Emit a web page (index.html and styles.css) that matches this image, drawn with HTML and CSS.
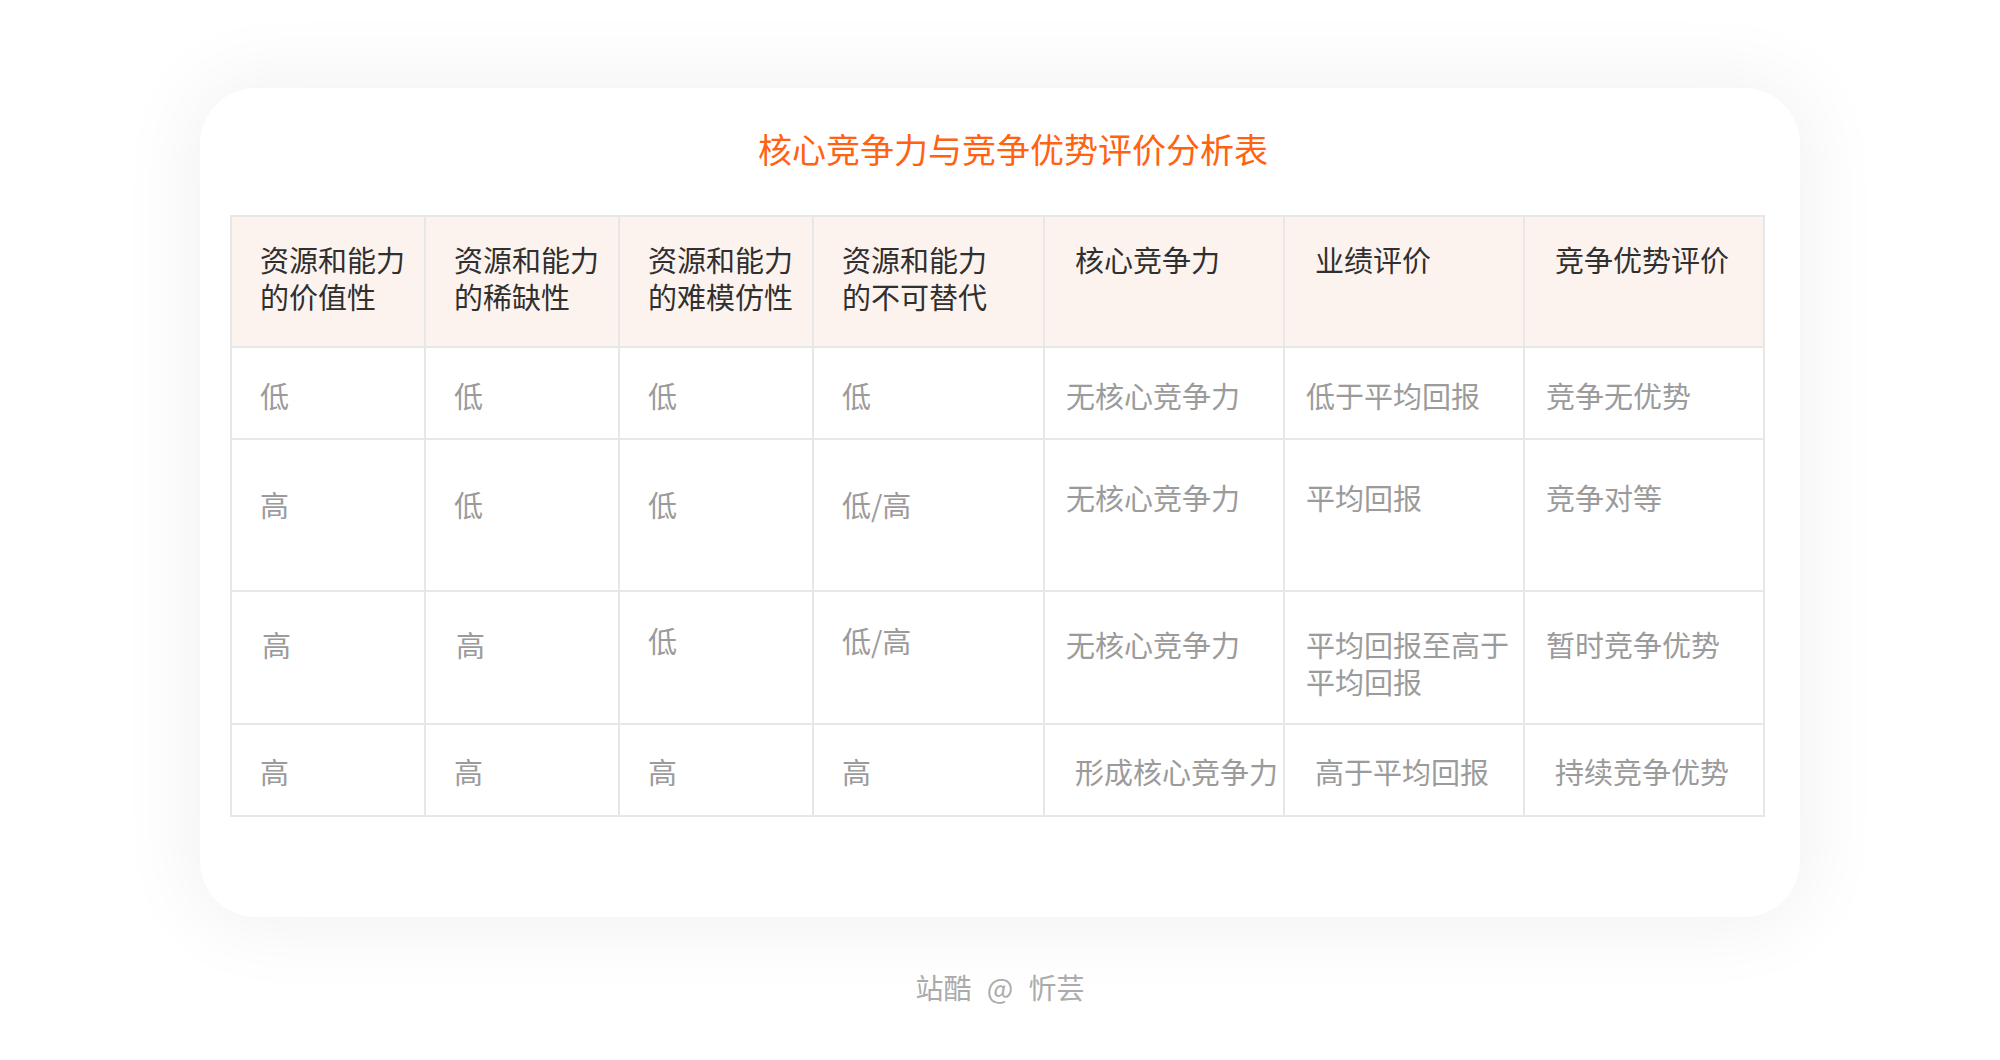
FILE: index.html
```html
<!DOCTYPE html>
<html lang="zh-CN">
<head>
<meta charset="utf-8">
<title>核心竞争力与竞争优势评价分析表</title>
<link rel="stylesheet" href="styles.css">
</head>
<body>
<div class="page">
  <div class="card">
    <h1 class="title">核心竞争力与竞争优势评价分析表</h1>
    <table class="grid">
      <colgroup>
        <col class="c-a"><col class="c-a"><col class="c-a"><col class="c-b"><col class="c-c"><col class="c-c"><col class="c-c">
      </colgroup>
      <thead>
        <tr class="r-head">
          <th>资源和能力<br>的价值性</th>
          <th>资源和能力<br>的稀缺性</th>
          <th>资源和能力<br>的难模仿性</th>
          <th>资源和能力<br>的不可替代</th>
          <th class="wide">核心竞争力</th>
          <th class="wide">业绩评价</th>
          <th class="wide">竞争优势评价</th>
        </tr>
      </thead>
      <tbody>
        <tr class="r1">
          <td>低</td><td>低</td><td>低</td><td>低</td>
          <td class="narrow">无核心竞争力</td><td class="narrow">低于平均回报</td><td class="narrow">竞争无优势</td>
        </tr>
        <tr class="r2">
          <td>高</td><td>低</td><td>低</td><td>低/高</td>
          <td class="narrow up">无核心竞争力</td><td class="narrow up">平均回报</td><td class="narrow up">竞争对等</td>
        </tr>
        <tr class="r3">
          <td class="nudge">高</td><td class="nudge">高</td><td class="up">低</td><td class="up">低/高</td>
          <td class="narrow">无核心竞争力</td><td class="narrow">平均回报至高于<br>平均回报</td><td class="narrow">暂时竞争优势</td>
        </tr>
        <tr class="r4">
          <td>高</td><td>高</td><td>高</td><td>高</td>
          <td class="wide">形成核心竞争力</td><td class="wide">高于平均回报</td><td class="wide">持续竞争优势</td>
        </tr>
      </tbody>
    </table>
  </div>
  <p class="credit">站酷 @ 忻芸</p>
</div>
</body>
</html>
```
FILE: styles.css
```css
html, body {
  margin: 0;
  padding: 0;
  background: #ffffff;
}

body {
  font-family: "Noto Sans CJK SC", "Noto Sans", sans-serif;
}

.page {
  padding-top: 88px;
}

.card {
  width: 1600px;
  height: 829px;
  margin: 0 auto;
  box-sizing: border-box;
  background: #ffffff;
  border-radius: 56px;
  box-shadow: 0 0 80px 10px rgba(0, 0, 0, 0.055);
  padding-left: 30px;
}

.title {
  margin: 0 0 46px -30px;
  padding: 41px 0 0 26px;
  height: 40px;
  line-height: 40px;
  font-size: 34px;
  font-weight: 400;
  color: #ff6212;
  text-align: center;
}

.grid {
  width: 1531px;
  table-layout: fixed;
  border-collapse: collapse;
  font-size: 29px;
  line-height: 37px;
}

.c-a { width: 194px; }
.c-b { width: 231px; }
.c-c { width: 240px; }

.grid th,
.grid td {
  border: 2px solid #e7e7e7;
  padding: 0 0 0 28px;
  vertical-align: top;
  text-align: left;
  white-space: nowrap;
  font-weight: 400;
}

.grid th {
  background: #fdf3ee;
  color: #303030;
}

.grid td {
  color: #9b9b9b;
}

.r-head { height: 131px; }
.r-head th { padding-top: 24px; }

.r1 { height: 92px; }
.r1 td { padding-top: 29px; }

.r2 { height: 152px; }
.r2 td { padding-top: 46px; }
.r2 td.up { padding-top: 39px; }

.r3 { height: 133px; }
.r3 td { padding-top: 34px; }
.r3 td.up { padding-top: 30px; }
.r3 td.nudge { padding-left: 30px; }

.r4 { height: 92px; }
.r4 td { padding-top: 28px; }

.grid .wide { padding-left: 30px; }
.grid .narrow { padding-left: 21px; }

.credit {
  margin: 52px 0 0 0;
  text-align: center;
  font-size: 28px;
  line-height: 36px;
  word-spacing: 9px;
  color: #ababab;
}
```
